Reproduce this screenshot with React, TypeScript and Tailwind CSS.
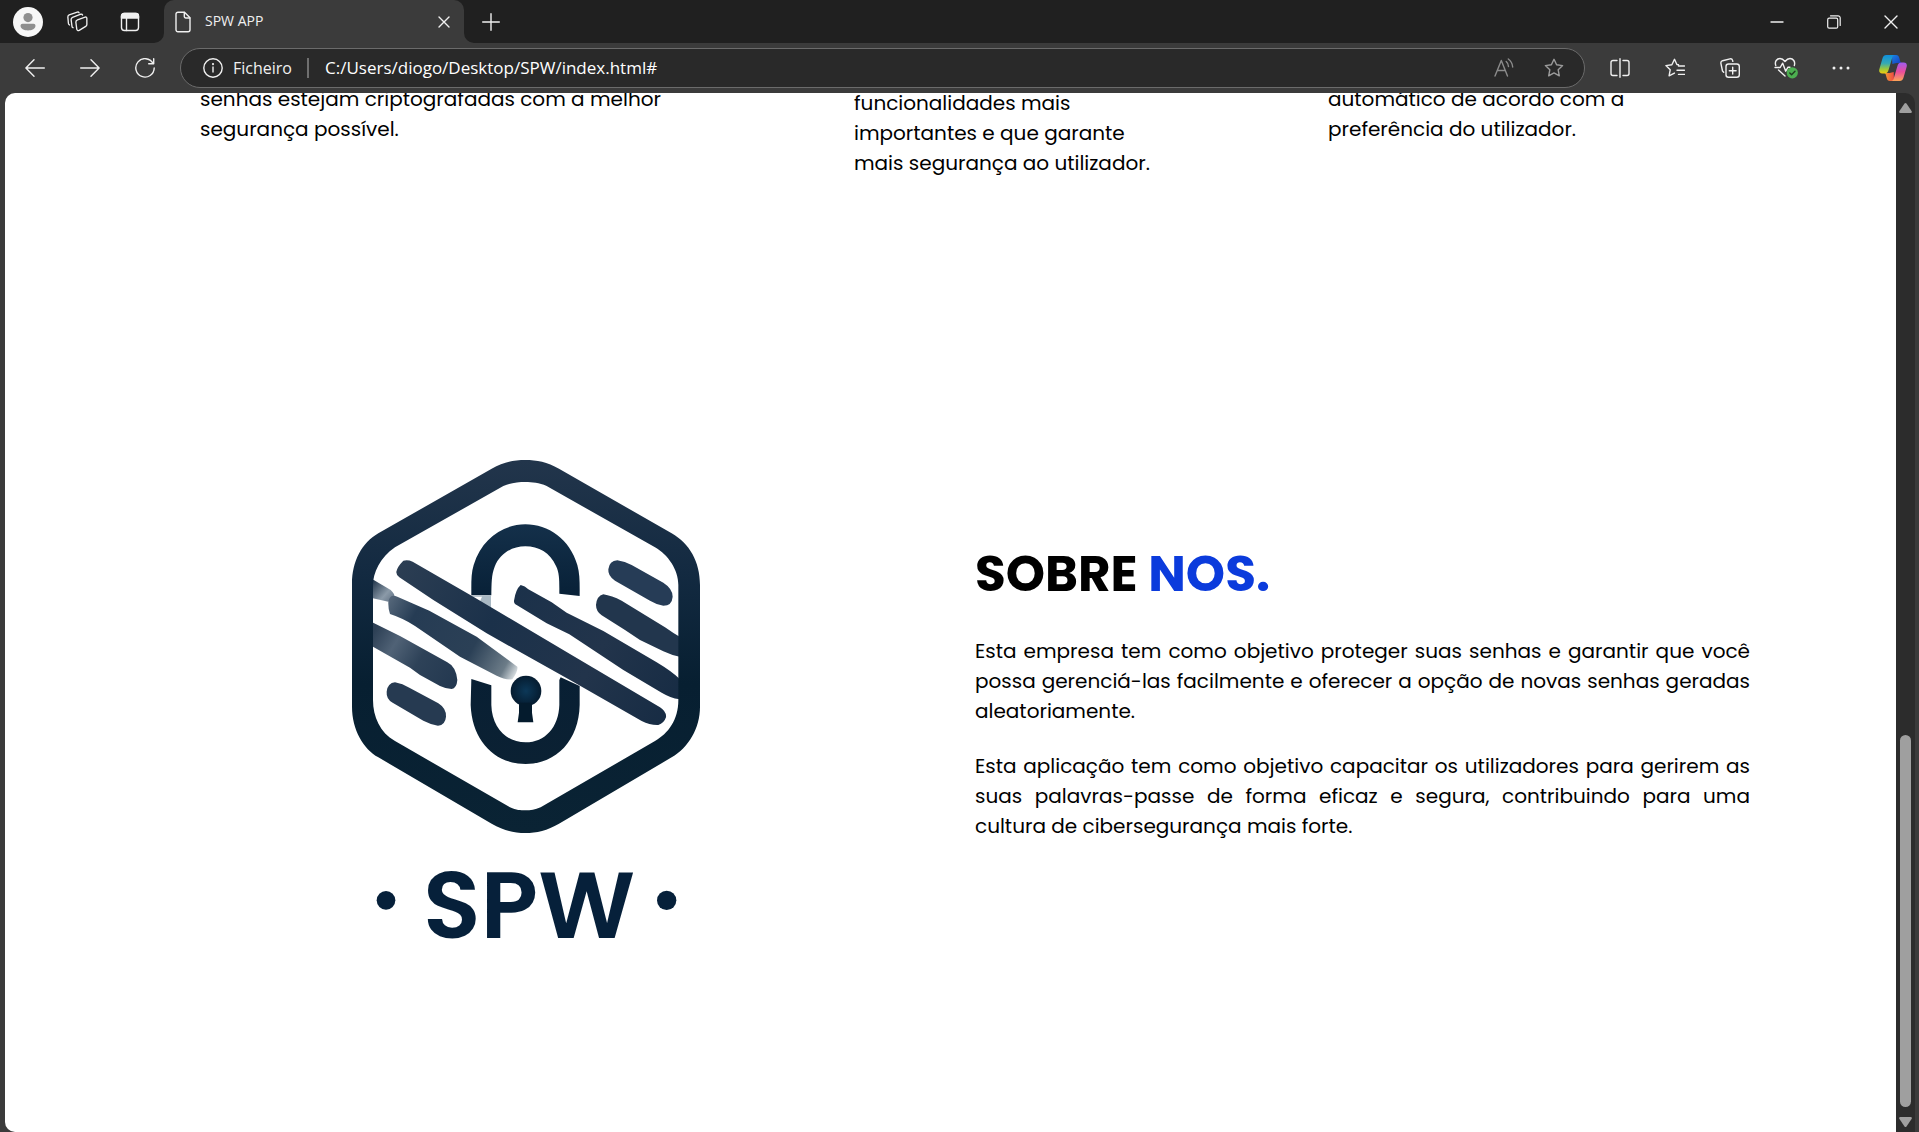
import React from "react";

const line = {
  fill: "none",
  stroke: "currentColor",
  strokeWidth: 1.4,
  strokeLinecap: "round" as const,
  strokeLinejoin: "round" as const,
};

function IconButton({ label, className = "", children }: { label: string; className?: string; children: React.ReactNode }) {
  return (
    <button type="button" aria-label={label} className={`flex h-full shrink-0 items-center justify-center ${className}`}>
      {children}
    </button>
  );
}

function TitleBar() {
  return (
    <header className="flex h-[43px] shrink-0 bg-[#202020] text-[#f0f0f0]">
      <div className="flex pl-0.5">
        <IconButton label="Perfil" className="w-[51px]">
          <svg width="30" height="30" viewBox="0 0 30 30">
            <circle cx="15" cy="15" r="15" fill="#f7f7f7" />
            <circle cx="15" cy="10.600" r="4.600" fill="#8f8f8f" />
            <path d="M9.500 16.800h11a2 2 0 0 1 2 2c0 3-3.500 4.700-7.500 4.700s-7.500-1.700-7.500-4.700a2 2 0 0 1 2-2z" fill="#8f8f8f" />
          </svg>
        </IconButton>
        <IconButton label="Áreas de trabalho" className="w-[49px]">
          <svg width="21" height="21" viewBox="0 0 22 22" {...line}>
            <path d="M11 9.200 19 6.400q1.800-.5 1.800 1.300v6.500q0 1.400-1.200 1.900l-6.800 4.200q-2 .8-2.600-1.300l-.9-7.200q-.2-1.900 1.700-2.600z" />
            <path d="M6.300 17.500q-.9-.3-1.100-1.500L4.300 9q-.1-1.700 1.500-2.400L14.500 3.400q1.300-.4 1.800.8" />
            <path d="M2.600 14.600q-.9-.4-1.100-1.500L.9 6.400Q.8 4.700 2.300 4.100L10.800 1.200q1.300-.4 1.800.7" />
          </svg>
        </IconButton>
        <IconButton label="Menu de separadores" className="w-[55px]">
          <svg width="20" height="20" viewBox="0 0 20 20" {...line}>
            <rect x="1.500" y="1.500" width="17" height="17" rx="3" />
            <path d="M1.500 6V4a2.500 2.500 0 0 1 2.500-2.500h12A2.500 2.500 0 0 1 18.500 4v2z" fill="currentColor" />
            <path d="M6.500 6v12.500" />
          </svg>
        </IconButton>
      </div>
      <div className="relative ml-[7px] flex w-[300px] items-center rounded-t-[10px] bg-[#3b3b3b] pl-[11px] pr-[13px]">
        <svg className="absolute bottom-0 -left-2.5" width="10" height="10" viewBox="0 0 10 10" fill="#3b3b3b">
          <path d="M10 0v10H0A10 10 0 0 0 10 0z" />
        </svg>
        <svg className="absolute bottom-0 -right-2.5" width="10" height="10" viewBox="0 0 10 10" fill="#3b3b3b">
          <path d="M0 0v10h10A10 10 0 0 1 0 0z" />
        </svg>
        <svg width="16" height="22" viewBox="0 0 16 22" {...line}>
          <path d="M3 1.200h6.500l5.500 5.600v12a2 2 0 0 1-2 2H3a2 2 0 0 1-2-2v-15.600a2 2 0 0 1 2-2z" />
          <path d="M9.300 1.500v4a1.500 1.500 0 0 0 1.500 1.500h4" />
        </svg>
        <span className="ml-3.5 flex-1 pb-0.5 text-sm">SPW APP</span>
        <button type="button" aria-label="Fechar separador">
          <svg width="14" height="14" viewBox="0 0 14 14" {...line}>
            <path d="M2 2l10 10M12 2l-10 10" />
          </svg>
        </button>
      </div>
      <IconButton label="Novo separador" className="w-[53px]">
        <svg width="18" height="18" viewBox="0 0 18 18" {...line}>
          <path d="M9 .700v16.600M.700 9h16.600" />
        </svg>
      </IconButton>
      <div className="ml-auto flex">
        <IconButton label="Minimizar" className="w-[57px]">
          <svg width="14" height="14" viewBox="0 0 14 14" {...line}><path d="M1 7h12" /></svg>
        </IconButton>
        <IconButton label="Restaurar" className="w-[57px]">
          <svg width="14" height="14" viewBox="0 0 14 14" {...line} strokeWidth="1.200">
            <rect x=".7" y="3.200" width="10" height="10" rx="1.500" />
            <path d="M3.500.8H11a2.200 2.200 0 0 1 2.200 2.200v7.500" />
          </svg>
        </IconButton>
        <IconButton label="Fechar" className="w-[57px]">
          <svg width="14" height="14" viewBox="0 0 14 14" {...line}><path d="M1 1l12 12M13 1L1 13" /></svg>
        </IconButton>
      </div>
    </header>
  );
}

const starPath = "M10 1.300l2.600 5.500 6 .8-4.400 4.200 1.100 6-5.300-2.900-5.300 2.900 1.100-6L1.400 7.600l6-.8z";

function Copilot() {
  return (
    <svg width="28" height="26" viewBox="0 0 28 26">
      <defs>
        <linearGradient id="cpA" x1="0" y1="0" x2="0" y2="1">
          <stop offset="0" stopColor="#0f8fdd" />
          <stop offset=".45" stopColor="#35a9b5" />
          <stop offset=".75" stopColor="#9bc83c" />
          <stop offset="1" stopColor="#f3cb0c" />
        </linearGradient>
        <linearGradient id="cpB" x1="0" y1="0" x2="0" y2="1">
          <stop offset="0" stopColor="#a05cf0" />
          <stop offset=".5" stopColor="#ea4c9c" />
          <stop offset="1" stopColor="#fca457" />
        </linearGradient>
        <linearGradient id="cpC" x1="0" y1="0" x2="1" y2="1">
          <stop offset="0" stopColor="#1a80e4" />
          <stop offset="1" stopColor="#1737b8" />
        </linearGradient>
        <linearGradient id="cpD" x1="0" y1="0" x2="1" y2="0">
          <stop offset="0" stopColor="#f2a32e" />
          <stop offset="1" stopColor="#ef4a44" />
        </linearGradient>
      </defs>
      <path d="M13 0h4c2 0 2.800 1.300 3.300 3l1 3.500c.3 1 .9 1.500 2 1.500h-6l-4 1z" fill="url(#cpC)" />
      <path d="M15 26h-4c-2 0-2.800-1.300-3.300-3l-1-3.500C6.400 18.500 5.800 18 4.700 18h6l4-1z" fill="url(#cpD)" />
      <path d="M7.500 0H16c-1.500 0-2.300 1-2.800 2.700L9.700 14.500C9 17 8 18.500 5.500 18.500H3.300C.5 18.500-.3 16.400.4 14L3.300 4C4 1.500 5 0 7.500 0z" fill="url(#cpA)" />
      <path d="M20.500 26H12c1.500 0 2.300-1 2.800-2.700l3.500-11.800C19 9 20 7.500 22.500 7.500h2.200c2.800 0 3.600 2.100 2.900 4.500L24.700 22c-.7 2.500-1.700 4-4.200 4z" fill="url(#cpB)" />
    </svg>
  );
}

function Toolbar() {
  return (
    <nav className="flex h-[50px] shrink-0 items-center bg-[#3b3b3b] pl-[7px] text-[#f0f0f0]">
      <IconButton label="Voltar" className="w-[55px]">
        <svg width="20" height="18" viewBox="0 0 20 18" {...line}><path d="M19.300 9H1M9 .800L.900 9 9 17.200" /></svg>
      </IconButton>
      <IconButton label="Avançar" className="w-[55px]">
        <svg width="20" height="18" viewBox="0 0 20 18" {...line}><path d="M.700 9H19M11 .800L19.100 9 11 17.200" /></svg>
      </IconButton>
      <IconButton label="Atualizar" className="w-[55px]">
        <svg width="20" height="20" viewBox="0 0 20 20" {...line}>
          <path d="M18 5.300A9.200 9.200 0 1 0 19.200 10" /><path d="M18.700.8v5h-5" />
        </svg>
      </IconButton>
      <div className="ml-2 flex h-10 flex-1 items-center rounded-full border border-[#6b6b6b] bg-[#292929] pl-[22px] pr-5">
        <svg width="20" height="20" viewBox="0 0 20 20" {...line}>
          <circle cx="10" cy="10" r="9.200" /><path d="M10 9v5" /><circle cx="10" cy="6.200" r=".4" />
        </svg>
        <label htmlFor="address" className="ml-[10px] w-[62px] text-base">Ficheiro</label>
        <span className="ml-3 h-5 w-0.5 bg-[#6f6f6f]" />
        <input
          id="address"
          className="ml-4 min-w-0 flex-1 bg-transparent text-[17px] text-white outline-none"
          defaultValue="C:/Users/diogo/Desktop/SPW/index.html#"
        />
        <button type="button" aria-label="Ler em voz alta" className="text-[#8b8b8b]">
          <svg width="20" height="20" viewBox="0 0 20 20" {...line}>
            <path d="M1 18L7.300 2.500 13.500 18M3.200 12.500h8.200" />
            <path d="M12.200 3.500q2.200 1.800 2.300 5M14.300 1q4 3 4.400 8" />
          </svg>
        </button>
        <button type="button" aria-label="Adicionar aos favoritos" className="ml-[30px] text-[#9b9b9b]">
          <svg width="20" height="20" viewBox="0 0 20 20" {...line}><path d={starPath} /></svg>
        </button>
      </div>
      <div className="ml-[7px] flex h-full">
        <IconButton label="Dividir ecrã" className="w-[55px]">
          <svg width="20" height="20" viewBox="0 0 20 20" {...line}>
            <path d="M7 2.500H3a2 2 0 0 0-2 2v11a2 2 0 0 0 2 2h4M13 2.500h4a2 2 0 0 1 2 2v11a2 2 0 0 1-2 2h-4M10 .700v18.600" />
          </svg>
        </IconButton>
        <IconButton label="Favoritos" className="w-[55px]">
          <svg width="20" height="20" viewBox="0 0 20 20" {...line}>
            <path d="M13.500 6.700l-1.600-.2-2.400-5.200-2.600 5.500-6 .8 4.300 4.200-1.100 6 5.300-2.700M13.500 8h6M12 12.200h7.500M13.500 16.400h6" />
          </svg>
        </IconButton>
        <IconButton label="Coleções" className="w-[55px]">
          <svg width="20" height="20" viewBox="0 0 20 20" {...line}>
            <rect x="6" y="6" width="13.300" height="13.300" rx="2.500" />
            <path d="M12.700 9.300v6.800M9.300 12.700h6.800M3.700 14.300L2.500 13 .9 5.300Q.6 3.300 2.600 2.700L10 .9q2-.4 2.600 1.500l.2.900" />
          </svg>
        </IconButton>
        <IconButton label="Desempenho" className="w-[57px]">
          <svg width="24" height="22" viewBox="0 0 24 22" {...line}>
            <path d="M1.800 8.500C.3 4.500 3 1.500 6 1.500c2.400 0 3.800 1.500 5 3 1.200-1.500 2.600-3 5-3 3 0 5.600 3 4.300 7M1 10.500h5.200l2.500-4.300 3 8 2.300-4h2M4.500 13l6.500 6" />
            <circle cx="18.300" cy="15.800" r="5.600" fill="#4caf50" stroke="none" />
            <path d="M15.800 16l1.800 1.800 3.400-3.600" stroke="#1f3d20" />
          </svg>
        </IconButton>
        <IconButton label="Mais" className="w-[53px]">
          <svg width="18" height="4" viewBox="0 0 18 4" fill="currentColor">
            <circle cx="2" cy="2" r="1.500" /><circle cx="9" cy="2" r="1.500" /><circle cx="16" cy="2" r="1.500" />
          </svg>
        </IconButton>
        <IconButton label="Copilot" className="w-[52px]"><Copilot /></IconButton>
      </div>
    </nav>
  );
}

function Logo() {
  return (
    <svg viewBox="33 30 1050 1440" className="w-[350px]" role="img" aria-label="SPW">
      <defs>
        <linearGradient id="frame" x1="0" y1="0" x2="0" y2="1">
          <stop offset="0" stopColor="#22354b" />
          <stop offset=".3" stopColor="#132a41" />
          <stop offset=".6" stopColor="#071f31" />
          <stop offset="1" stopColor="#0a2334" />
        </linearGradient>
        <linearGradient id="lock" gradientUnits="userSpaceOnUse" x1="0" y1="220" x2="0" y2="945">
          <stop offset="0" stopColor="#14304a" />
          <stop offset=".35" stopColor="#061e34" />
          <stop offset="1" stopColor="#0b2133" />
        </linearGradient>
        <linearGradient id="bar" gradientUnits="userSpaceOnUse" x1="170" y1="340" x2="980" y2="820">
          <stop offset="0" stopColor="#2c3e53" />
          <stop offset=".35" stopColor="#1b314a" />
          <stop offset=".7" stopColor="#22344b" />
          <stop offset="1" stopColor="#172c44" />
        </linearGradient>
        <linearGradient id="fade" gradientUnits="userSpaceOnUse" x1="145" y1="450" x2="535" y2="670">
          <stop offset="0" stopColor="#55677a" />
          <stop offset=".2" stopColor="#263c54" />
          <stop offset=".65" stopColor="#2b4056" />
          <stop offset=".9" stopColor="#6c7c88" />
          <stop offset="1" stopColor="#e5eaec" />
        </linearGradient>
        <linearGradient id="edge" gradientUnits="userSpaceOnUse" x1="98" y1="550" x2="350" y2="700">
          <stop offset="0" stopColor="#2d4055" />
          <stop offset=".25" stopColor="#506276" />
          <stop offset=".55" stopColor="#2e4258" />
          <stop offset="1" stopColor="#233850" />
        </linearGradient>
        <linearGradient id="glint" gradientUnits="userSpaceOnUse" x1="98" y1="395" x2="165" y2="455">
          <stop offset="0" stopColor="#26394e" />
          <stop offset=".6" stopColor="#8b9aa8" />
          <stop offset="1" stopColor="#5c6d80" />
        </linearGradient>
        <radialGradient id="key">
          <stop offset="0" stopColor="#0c3858" />
          <stop offset="1" stopColor="#051c30" />
        </radialGradient>
      </defs>
      <path d="M768 465Q770 438 790 433Q815 437 845 452L975 532Q1000 550 1019 560V620Q995 616 970 604L900 570L855 540L785 496Q768 484 768 465Z" fill="#22364d" />
      <path d="M522 452Q527 418 542 405Q555 408 565 418L635 457L680 488L790 543L950 637Q995 664 1019 687V748Q990 743 965 728L850 660L688 553L620 520L530 465Q521 460 522 452Z" fill="url(#bar)" />
      <g fill="url(#lock)">
        <path d="M394 436C394 400 393 370 401 345C425 265 490 223 556 223C625 223 690 268 712 345C720 375 719 400 719 438L658 431C658 395 659 370 648 348C630 308 596 289 556 289C516 289 480 310 464 350C454 375 455 400 454 436Z" />
        <path d="M394 687L454 706V765C456 835 500 877 557 877C615 877 656 832 658 765V690L662 682L719 708V765C717 870 650 942 557 942C462 942 396 870 392 765Z" />
      </g>
      <path d="M396 437L453 436V484L425 462Z" fill="#a9b9c4" />
      <path d="M396 440h30l-6 14z" fill="#fff" />
      <path d="M95 386L152 420Q165 432 163 440L145 455L95 444Z" fill="url(#glint)" />
      <path d="M169 365Q172 350 190 332Q203 328 218 335L400 440L700 618L960 772Q980 785 978 802Q972 820 955 825Q930 826 905 813L690 690L440 550L280 450L178 382Q168 374 169 365Z" fill="url(#bar)" />
      <path d="M145 455Q150 430 172 440L268 482L410 560L532 650Q535 662 517 688Q495 690 470 677L360 620L225 528Q190 505 150 492Q144 475 145 455Z" fill="url(#fade)" />
      <path d="M95 516L180 558L322 637Q348 650 352 690Q350 715 335 717Q315 715 300 708L240 675L210 653L95 588Z" fill="url(#edge)" />
      <path d="M805 358Q808 332 832 331Q855 335 875 345L970 398Q998 416 998 440Q996 467 970 467Q950 464 930 452L825 392Q803 378 805 358Z" fill="#263c56" />
      <path d="M140 725Q143 699 165 697Q188 701 208 713L295 760Q319 775 318 800Q316 825 294 827Q273 824 250 812L158 758Q138 747 140 725Z" fill="#263a51" />
      <circle cx="558" cy="723" r="46" fill="url(#key)" />
      <path d="M537 758h39v30l4 29h-47l4-29z" fill="#041b2d" />
      <path
        fill="url(#frame)"
        fillRule="evenodd"
        d="M455 56C490 36 522 30 556 30S622 36 657 56L995 250C1048 280 1080 335 1080 405V770C1080 835 1045 893 995 922L657 1121C622 1141 590 1149 556 1149S490 1141 455 1121L115 922C70 896 36 840 36 770V400C36 335 65 279 115 250ZM490 108L165 292C120 322 99 370 99 405V750C99 800 120 848 165 873L510 1072C530 1081 540 1081 556 1081S585 1080 602 1072L945 873C985 850 1015 810 1015 750V405C1015 360 985 315 945 292L620 108C597 98 577 96 556 96S513 98 490 108Z"
      />
      <g fill="#06203a">
        <circle cx="138" cy="1351" r="28" />
        <circle cx="980" cy="1351" r="29" />
        <text x="567" y="1465" fontSize="284" textAnchor="middle" className="font-['Poppins','Lato',sans-serif] font-semibold">SPW</text>
      </g>
    </svg>
  );
}

function Scrollbar() {
  return (
    <div className="flex w-[19px] flex-col items-center rounded-tr-[10px] bg-[#2c2c2c]">
      <svg className="mt-2.5" width="13" height="10" viewBox="0 0 13 10" fill="#9f9f9f">
        <path d="M5.500.6q1-1 2 0l5.200 7.600q.6 1.800-1 1.800H1.300Q-.3 10 .3 8.200z" />
      </svg>
      <div className="flex-[622]" />
      <div className="w-[11px] flex-[372] rounded-full bg-[#9f9f9f]" />
      <svg className="mt-2.5 mb-[5px]" width="13" height="10" viewBox="0 0 13 10" fill="#9f9f9f">
        <path d="M5.500 9.400q1 1 2 0l5.200-7.600Q13.300 0 11.700 0H1.300Q-.3 0 .3 1.800z" />
      </svg>
    </div>
  );
}

export default function App() {
  return (
    <div className="flex h-screen flex-col overflow-hidden bg-[#3b3b3b] font-['Segoe_UI','Open_Sans',sans-serif]">
      <TitleBar />
      <Toolbar />
      <div className="flex min-h-0 flex-1 pr-1 pl-[5px]">
        <main className="flex-1 overflow-hidden rounded-tl-[10px] rounded-bl-[10px] bg-white font-['Poppins','Inter',sans-serif] text-xl leading-[30px] text-black">
          <section className="-mt-[9px] grid grid-cols-[654fr_474fr_568fr] pl-[195px]">
            <p>senhas estejam criptografadas com a melhor<br />segurança possível.</p>
            <p className="pt-1">funcionalidades mais<br />importantes e que garante<br />mais segurança ao utilizador.</p>
            <p>automático de acordo com a<br />preferência do utilizador.</p>
          </section>
          <section className="mt-[282px] grid grid-cols-[751fr_775fr] items-center gap-[74px] pr-[146px] pl-[145px]">
            <div className="flex justify-center"><Logo /></div>
            <div className="pb-[22px]">
              <h1 className="text-[50px] leading-[72px] font-bold">SOBRE <span className="text-[#0b3bdc]">NOS.</span></h1>
              <p className="mt-[26px] text-justify">
                Esta empresa tem como objetivo proteger suas senhas e garantir que você possa gerenciá-las facilmente e oferecer a opção de novas senhas geradas aleatoriamente.
              </p>
              <p className="mt-[25px] text-justify">
                Esta aplicação tem como objetivo capacitar os utilizadores para gerirem as suas palavras-passe de forma eficaz e segura, contribuindo para uma cultura de cibersegurança mais forte.
              </p>
            </div>
          </section>
        </main>
        <Scrollbar />
      </div>
    </div>
  );
}
